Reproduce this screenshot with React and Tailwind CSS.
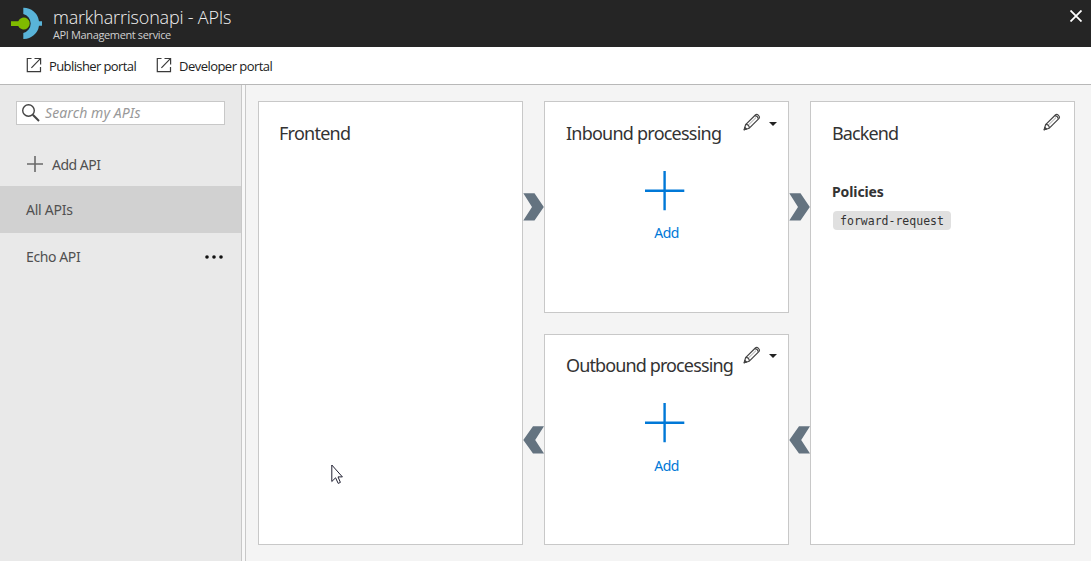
import React from "react";

function ExternalLink() {
  return (
    <svg className="-mt-[2px] h-4 w-4 shrink-0" viewBox="0 0 16 16" fill="none" stroke="#3a3a3a" strokeWidth="1.2">
      <path d="M5.5 1.5H1.3V14.6H14.5V10" />
      <path d="M8.5 1.5H14.6V7.5M14.4 1.6L5.4 10.8" />
    </svg>
  );
}

function Logo() {
  return (
    <svg className="h-8 w-8 shrink-0" viewBox="0 0 32 32">
      <path d="M12.3 0.8A15.5 15.5 0 0 1 28 14.2H31V18.7H28A15.5 15.5 0 0 1 12.3 32V26A9.8 9.8 0 0 0 12.3 7Z" fill="#59b4d9" />
      <path d="M0 14.2H7.2A6 6 0 1 1 7.2 18.9H0Z" fill="#7fba00" />
    </svg>
  );
}

function Pencil() {
  return (
    <svg className="h-[18px] w-[18px] shrink-0" viewBox="0 0 18 18" fill="none" stroke="#444" strokeWidth="1.2" strokeLinejoin="round">
      <path d="M1.2 16.8L2.6 11.6L12.6 1.8C14.2 0.6 17.6 3.4 16.1 5.4L6.3 15.2Z" />
      <path d="M2.8 11.4C4.8 11.4 6.4 13 6.3 15M12 2.6C13.6 2.8 15 4.2 15.2 5.8" />
      <path d="M5 12.4L13 4.6" strokeWidth="0.5" />
      <path d="M1.2 16.8L1.8 14.4L3.6 16Z" fill="#222" />
    </svg>
  );
}

function Chevron({ className, flip }) {
  return (
    <svg className={"h-7 w-[21px] shrink-0 " + className} viewBox="0 0 21 28" fill="#647380">
      <path d={flip ? "M10 0.3H21L12.2 14L21 27.5H10L0.3 14Z" : "M0.3 0.3H11.5L20.8 14L11.5 27.5H0.3L9 14Z"} />
    </svg>
  );
}

function Arrows() {
  return (
    <div className="flex w-[21px] shrink-0 flex-col">
      <Chevron className="mt-[92px]" />
      <Chevron className="mt-[205px]" flip />
    </div>
  );
}

function Processing({ title, className, titleClass, caretClass, addClass }) {
  return (
    <section className={"relative w-[245px] border border-[#c8c8c8] bg-white " + className}>
      <h2 className={"ml-[21px] h-[26px] whitespace-nowrap text-[18px] leading-[26px] " + titleClass}>{title}</h2>
      <div className="absolute right-[11px] top-[11px] flex items-center gap-2">
        <Pencil />
        <svg className={"h-1 w-2 " + caretClass} viewBox="0 0 8 4" fill="#222">
          <path d="M0 0H8L4 4Z" />
        </svg>
      </div>
      <button className="ml-[100px] mt-[25px] flex w-10 flex-col items-center text-[#0078d7]">
        <svg className="h-10 w-10" viewBox="0 0 40 40" stroke="#0078d7" strokeWidth="2.4">
          <path d="M0 19.7H39.3M19.6 0V39.3" />
        </svg>
        <span className={"ml-[3px] text-[14px] leading-5 tracking-[-0.6px] " + addClass}>Add</span>
      </button>
    </section>
  );
}

export default function App() {
  return (
    <div className="flex h-[561px] w-[1091px] flex-col overflow-hidden bg-[#f4f4f4] font-['Noto_Sans',sans-serif] text-[#333]">
      <header className="flex h-[47px] shrink-0 bg-[#252525] pl-[11px] font-['Open_Sans',sans-serif]">
        <div className="mt-[7px]"><Logo /></div>
        <div className="ml-[10px] mt-[5px] whitespace-nowrap">
          <h1 className="text-[18px] font-light leading-[25px] tracking-[-0.2px] text-[#f2f2f2]">markharrisonapi - APIs</h1>
          <p className="-mt-px text-[11px] leading-[11px] tracking-[-0.37px] text-[#d0d0d0]">API Management service</p>
        </div>
        <svg className="ml-auto mr-[9px] mt-[10px] h-3 w-3" viewBox="0 0 12 12" stroke="#fff" strokeWidth="1.8">
          <path d="M0.5 0.5L11.5 11.5M11.5 0.5L0.5 11.5" />
        </svg>
      </header>
      <nav className="flex h-[38px] shrink-0 items-center border-b border-[#b8b8b8] bg-white pl-[26px] font-['Open_Sans',sans-serif] text-[13px] text-[#222]">
        <a className="flex w-[130px] items-center gap-[7px] whitespace-nowrap tracking-[-0.6px]"><ExternalLink /><span className="mt-[2px]">Publisher portal</span></a>
        <a className="flex items-center gap-[7px] whitespace-nowrap tracking-[-0.53px]"><ExternalLink /><span className="mt-[2px]">Developer portal</span></a>
      </nav>
      <div className="flex min-h-0 flex-1">
        <aside className="w-[242px] shrink-0 border-r border-[#c8c8c8] bg-[#e9e9e9] text-[14px] tracking-[-0.5px] text-[#505050]">
          <label className="ml-4 mt-4 flex h-6 w-[209px] items-center border border-[#c8c8c8] bg-white pl-[5px]">
            <svg className="h-[18px] w-[18px] shrink-0" viewBox="0 0 18 18" fill="none" stroke="#444">
              <circle cx="6.5" cy="6.5" r="5.8" strokeWidth="1.4" />
              <path d="M10.8 10.8L17 17" strokeWidth="2" />
            </svg>
            <span className="-mt-[2px] ml-[5px] italic tracking-[0.1px] text-[#999]">Search my APIs</span>
          </label>
          <div className="mt-[14px] flex h-[47px] items-center pl-[27px]">
            <svg className="mt-[2px] h-4 w-4" viewBox="0 0 16 16" stroke="#6a6a6a" strokeWidth="1.6">
              <path d="M0 8H16M8 0V16" />
            </svg>
            <span className="ml-[9px] mt-[3px]">Add API</span>
          </div>
          <div className="flex h-[47px] items-center bg-[#d1d1d1] pl-[26px]"><span className="-mt-px tracking-[-0.25px]">All APIs</span></div>
          <div className="flex h-[47px] items-center justify-between pl-[26px] pr-[18px]">
            <span className="-mt-px tracking-[-0.4px]">Echo API</span>
            <svg className="mt-px h-1 w-[18px]" viewBox="0 0 18 4" fill="#111">
              <circle cx="2" cy="2" r="1.8" /><circle cx="9" cy="2" r="1.8" /><circle cx="16" cy="2" r="1.8" />
            </svg>
          </div>
        </aside>
        <main className="ml-[3px] flex flex-1 border-l border-[#c8c8c8] pl-3 pt-4 shadow-[-3px_0_0_#f8f8f8]">
          <section className="h-[444px] w-[265px] shrink-0 border border-[#c8c8c8] bg-white">
            <h2 className="ml-[20px] mt-[18px] text-[18px] leading-[26px] tracking-[-0.75px]">Frontend</h2>
          </section>
          <Arrows />
          <div className="flex shrink-0 flex-col gap-[21px]">
            <Processing title="Inbound processing" className="h-[212px]" titleClass="mt-[18px] tracking-[-0.77px]" caretClass="mt-[3px]" addClass="mt-[12px]" />
            <Processing title="Outbound processing" className="h-[211px]" titleClass="mt-[17px] tracking-[-0.88px]" caretClass="mt-[2px]" addClass="mt-[13px]" />
          </div>
          <Arrows />
          <section className="relative h-[444px] w-[265px] shrink-0 border border-[#c8c8c8] bg-white pl-[21px]">
            <h2 className="mt-[18px] text-[18px] leading-[26px] tracking-[-0.88px]">Backend</h2>
            <div className="absolute right-[13px] top-[11px]"><Pencil /></div>
            <h3 className="mt-[36px] text-[14px] font-bold leading-5 tracking-[-0.1px]">Policies</h3>
            <code className="ml-px mt-[9px] flex h-[19px] w-[118px] items-center justify-center rounded-[4px] bg-[#e0e0e0] pt-[2px] font-['DejaVu_Sans_Mono',monospace] text-[11.5px]">forward-request</code>
          </section>
        </main>
      </div>
      <svg className="absolute left-[331px] top-[464px] h-[21px] w-[13px]" viewBox="0 0 13 21" fill="#fff" stroke="#223" strokeWidth="1">
        <path d="M0.8 1V17.5L4.6 13.8L7.2 19.4L9.4 18.4L7 12.9H11.4Z" />
      </svg>
    </div>
  );
}
